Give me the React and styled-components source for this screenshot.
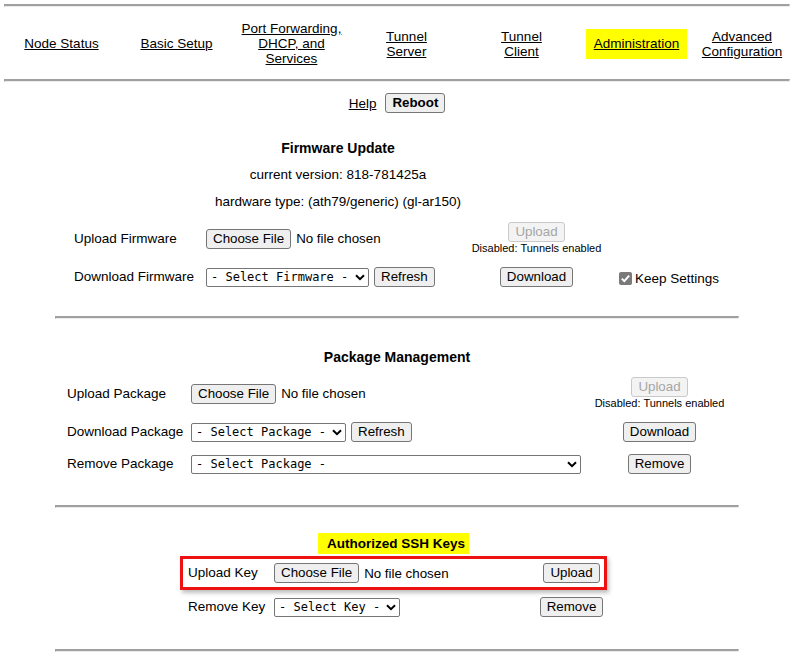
import styled, { createGlobalStyle } from 'styled-components'

const GlobalStyle = createGlobalStyle`
    body {
        margin: 0;
        background: #fff;
        color: #000;
        font-family: "Liberation Sans", Arial, sans-serif;
        font-size: 13.5px;
    }
`

const Page = styled.div`
    padding: 4px 6px 0 4px;
`

const Rule = styled.hr`
    margin: ${ ( { $top } ) => $top || 0 }px 0 0;
    height: 0;
    border: 0;
    border-top: 2px solid #a0a0a0;
    border-bottom: 1px solid #ececec;
    border-left: 1px solid #a0a0a0;
    border-right: 1px solid #ececec;
`

const Nav = styled.nav`
    display: grid;
    grid-template-columns: repeat(6, 115px) 1fr;
    align-items: center;
    padding: 14px 0 13px;
`

const NavCell = styled.div`
    text-align: center;
    line-height: 15px;
`

const Link = styled.a`
    color: #000;
    text-decoration: underline;
    cursor: pointer;
    ${ ( { $active } ) => $active && `
        display: inline-block;
        background: #ffff00;
        padding: 7px 8px 8px;
    ` }
`

const Content = styled.main`
    width: 684px;
    margin: 0 auto;
`

const HelpRow = styled.div`
    display: flex;
    justify-content: center;
    align-items: center;
    gap: 9px;
    margin-top: 11px;
`

const Button = styled.button`
    font-family: "Liberation Sans", Arial, sans-serif;
    font-size: 13.33px;
    font-weight: ${ ( { $bold } ) => $bold ? 700 : 400 };
    line-height: 16px;
    height: 20px;
    padding: 1px 6px;
    border: 1px solid #767676;
    border-radius: 3px;
    background: #efefef;
    color: #000;
    white-space: nowrap;

    &:disabled {
        border-color: #c9c9c9;
        background: #f3f3f3;
        color: #a6a6a6;
    }
`

const FileInput = styled.div`
    display: flex;
    align-items: center;
    gap: 5px;
    font-size: 13.33px;
    white-space: nowrap;
`

const SelectWrap = styled.span`
    position: relative;
    display: inline-flex;
    width: ${ ( { $w } ) => $w }px;
    height: 19px;
`

const Select = styled.select`
    appearance: none;
    width: 100%;
    height: 19px;
    padding: 0 14px 0 4px;
    border: 1px solid #767676;
    border-radius: 2px;
    background: #fff;
    color: #000;
    font-family: "DejaVu Sans Mono", "Liberation Mono", monospace;
    font-size: 12px;
    line-height: 17px;
`

const Chevron = styled.svg`
    position: absolute;
    right: 4px;
    top: 6px;
    pointer-events: none;
`

const Controls = styled.div`
    display: flex;
    align-items: center;
    gap: 5px;
`

const Title = styled.div`
    font-weight: 700;
    font-size: 14px;
    line-height: 16px;
    text-align: center;
`

const FirmwareGrid = styled.div`
    display: grid;
    grid-template-columns: 136px 261px 139px 1fr;
    row-gap: 12px;
    align-items: center;
    margin: 27px 0 0 15px;
`

const FirmwareHead = styled.div`
    grid-column: 1 / 4;
    display: flex;
    flex-direction: column;
    gap: 11px;
    text-align: center;
    line-height: 16px;
`

const Label = styled.div`
    grid-column-start: 1;
    padding-left: ${ ( { $pad } ) => $pad ?? 4 }px;
    line-height: 16px;
    white-space: nowrap;
`

const Action = styled.div`
    display: flex;
    flex-direction: column;
    align-items: center;
`

const Note = styled.div`
    font-size: 11px;
    line-height: 13px;
    white-space: nowrap;
`

const Keep = styled.label`
    display: flex;
    align-items: center;
    gap: 3px;
    padding-left: 13px;
    margin-top: 2px;
    white-space: nowrap;
`

const PackageTitle = styled( Title )`
    margin-top: 30px;
`

const PackageGrid = styled.div`
    display: grid;
    grid-template-columns: 128px 403px 131px;
    row-gap: 12px;
    align-items: center;
    margin: 12px 0 0 8px;
`

const SshTable = styled.div`
    width: 427px;
    margin: 25px 0 0 125px;
    display: flex;
    flex-direction: column;
    align-items: stretch;
`

const Highlight = styled.div`
    align-self: center;
    background: #ffff00;
    font-weight: 700;
    line-height: 16px;
    padding: 3px 4px 2px 9px;
`

const SshRow = styled.div`
    display: grid;
    grid-template-columns: 91px 265px 65px;
    align-items: center;
    ${ ( { $marked } ) => $marked ? `
        margin-top: 2px;
        padding: 4px 0 4px;
        border: 3px solid #ee1111;
        box-shadow: 2px 3px 4px rgba(0, 0, 0, 0.25);
    ` : `
        margin-top: 7px;
        padding: 0 3px;
    ` }
`

const Center = styled.div`
    display: flex;
    justify-content: center;
`

function Dropdown( { width, label } ) {
    return <SelectWrap $w={ width }>
        <Select defaultValue="">
            <option value="">{ label }</option>
        </Select>
        <Chevron width="10" height="7" viewBox="0 0 10 7">
            <path d="M1 1.2 L5 5.2 L9 1.2" fill="none" stroke="#000" strokeWidth="2" />
        </Chevron>
    </SelectWrap>
}

function ChooseFile() {
    return <FileInput>
        <Button>Choose File</Button>
        <span>No file chosen</span>
    </FileInput>
}

function Checkbox() {
    return <svg width="13" height="13" viewBox="0 0 13 13">
        <rect x="0" y="0" width="13" height="13" rx="2" fill="#7a7a7a" />
        <path d="M2.8 6.6 L5.3 9.1 L10.2 3.6" fill="none" stroke="#fff" strokeWidth="2" />
    </svg>
}

const NAV = [
    [ 'Node Status' ],
    [ 'Basic Setup' ],
    [ 'Port Forwarding,', 'DHCP, and', 'Services' ],
    [ 'Tunnel', 'Server' ],
    [ 'Tunnel', 'Client' ],
    [ 'Administration' ],
    [ 'Advanced', 'Configuration' ],
]

export default function App() {

    return <Page>
        <GlobalStyle />
        <Rule />
        <Nav>
            { NAV.map( ( lines, i ) => <NavCell key={ i }>
                <Link $active={ lines[ 0 ] === 'Administration' }>
                    { lines.map( ( line, j ) => <span key={ j }>{ j > 0 && <br /> }{ line }</span> ) }
                </Link>
            </NavCell> ) }
        </Nav>
        <Rule />

        <Content>
            <HelpRow>
                <Link>Help</Link>
                <Button $bold>Reboot</Button>
            </HelpRow>

            <FirmwareGrid>
                <FirmwareHead>
                    <Title>Firmware Update</Title>
                    <div>current version: 818-781425a</div>
                    <div>hardware type: (ath79/generic) (gl-ar150)</div>
                </FirmwareHead>

                <Label>Upload Firmware</Label>
                <ChooseFile />
                <Action>
                    <Button disabled>Upload</Button>
                    <Note>Disabled: Tunnels enabled</Note>
                </Action>
                <div />

                <Label>Download Firmware</Label>
                <Controls>
                    <Dropdown width={ 163 } label="- Select Firmware -" />
                    <Button>Refresh</Button>
                </Controls>
                <Action>
                    <Button>Download</Button>
                </Action>
                <Keep>
                    <Checkbox />
                    <span>Keep Settings</span>
                </Keep>
            </FirmwareGrid>

            <Rule $top={ 29 } />

            <PackageTitle>Package Management</PackageTitle>
            <PackageGrid>
                <Label>Upload Package</Label>
                <ChooseFile />
                <Action>
                    <Button disabled>Upload</Button>
                    <Note>Disabled: Tunnels enabled</Note>
                </Action>

                <Label>Download Package</Label>
                <Controls>
                    <Dropdown width={ 155 } label="- Select Package -" />
                    <Button>Refresh</Button>
                </Controls>
                <Action>
                    <Button>Download</Button>
                </Action>

                <Label>Remove Package</Label>
                <Controls>
                    <Dropdown width={ 390 } label="- Select Package -" />
                </Controls>
                <Action>
                    <Button>Remove</Button>
                </Action>
            </PackageGrid>

            <Rule $top={ 31 } />

            <SshTable>
                <Highlight>Authorized SSH Keys</Highlight>
                <SshRow $marked>
                    <Label $pad={ 5 }>Upload Key</Label>
                    <ChooseFile />
                    <Center><Button>Upload</Button></Center>
                </SshRow>
                <SshRow>
                    <Label $pad={ 5 }>Remove Key</Label>
                    <Controls>
                        <Dropdown width={ 126 } label="- Select Key -" />
                    </Controls>
                    <Center><Button>Remove</Button></Center>
                </SshRow>
            </SshTable>

            <Rule $top={ 32 } />
        </Content>
    </Page>

}
